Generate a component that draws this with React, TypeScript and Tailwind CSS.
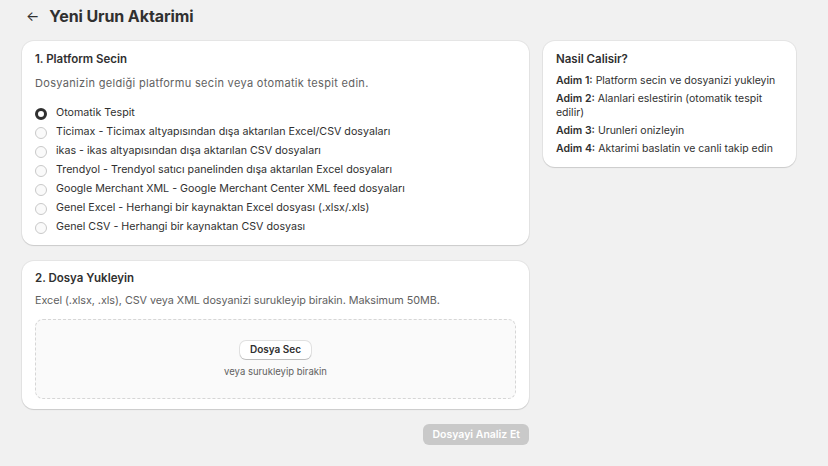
import { useState } from 'react';

const platforms = [
  { id: 'auto', label: 'Otomatik Tespit' },
  { id: 'ticimax', label: 'Ticimax - Ticimax altyapısından dışa aktarılan Excel/CSV dosyaları' },
  { id: 'ikas', label: 'ikas - ikas altyapısından dışa aktarılan CSV dosyaları' },
  { id: 'trendyol', label: 'Trendyol - Trendyol satıcı panelinden dışa aktarılan Excel dosyaları' },
  { id: 'gmc', label: 'Google Merchant XML - Google Merchant Center XML feed dosyaları' },
  { id: 'excel', label: 'Genel Excel - Herhangi bir kaynaktan Excel dosyası (.xlsx/.xls)' },
  { id: 'csv', label: 'Genel CSV - Herhangi bir kaynaktan CSV dosyası' },
];

const steps = [
  { title: 'Adim 1:', text: 'Platform secin ve dosyanizi yukleyin' },
  { title: 'Adim 2:', text: 'Alanlari eslestirin (otomatik tespit edilir)' },
  { title: 'Adim 3:', text: 'Urunleri onizleyin' },
  { title: 'Adim 4:', text: 'Aktarimi baslatin ve canli takip edin' },
];

const card =
  'bg-white rounded-[12px] shadow-[0_1px_1px_0_rgba(26,26,26,0.12),0_0_0_1px_rgba(26,26,26,0.05)]';

export default function App() {
  const [platform, setPlatform] = useState('auto');

  return (
    <div className="min-h-[466px] bg-[#f1f1f1] text-[#303030] font-['Inter','Liberation_Sans',sans-serif] px-[22px]">
      <div className="flex items-center h-[31px] pl-[4px] gap-[10px]">
        <button className="text-[14px] leading-none text-[#303030]">←</button>
        <h1 className="text-[16px] font-bold tracking-[-0.1px]">Yeni Urun Aktarimi</h1>
      </div>

      <div className="flex items-start gap-[14px] mt-[10px]">
        <div className="w-[507px] flex flex-col gap-[16px]">
          <div className={`${card} px-[13px] pt-[10px] pb-[8px]`}>
            <h2 className="text-[11.5px] leading-[16px] font-semibold">1. Platform Secin</h2>
            <p className="mt-[8px] text-[11px] tracking-[0.32px] leading-[16px] text-[#616161]">
              Dosyanizin geldiği platformu secin veya otomatik tespit edin.
            </p>
            <div className="mt-[13px] flex flex-col">
              {platforms.map((p) => (
                <label
                  key={p.id}
                  className="flex items-center h-[19px] gap-[9px] cursor-pointer text-[10.7px]"
                  onClick={() => setPlatform(p.id)}
                >
                  <span
                    className={
                      platform === p.id
                        ? 'w-[12px] h-[12px] rounded-full border-[3.5px] border-[#303030] bg-white shrink-0'
                        : 'w-[12px] h-[12px] rounded-full border border-[#c9c9c9] bg-[#fafafa] shrink-0'
                    }
                  />
                  <span>{p.label}</span>
                </label>
              ))}
            </div>
          </div>

          <div className={`${card} px-[13px] pt-[9px] pb-[10px]`}>
            <h2 className="text-[11.5px] leading-[16px] font-semibold">2. Dosya Yukleyin</h2>
            <p className="mt-[7px] text-[10.8px] tracking-[-0.05px] leading-[16px] text-[#616161]">
              Excel (.xlsx, .xls), CSV veya XML dosyanizi surukleyip birakin. Maksimum 50MB.
            </p>
            <div className="mt-[10px] h-[80px] rounded-[8px] border border-dashed border-[#d6d6d6] bg-[#fafafa] flex flex-col items-center justify-center">
              <button className="mt-[2px] h-[18px] px-[10px] rounded-[6px] bg-white text-[10px] font-semibold shadow-[0_1px_0_0_rgba(0,0,0,0.15),0_0_0_1px_rgba(0,0,0,0.1)]">
                Dosya Sec
              </button>
              <span className="mt-[6px] text-[9.5px] text-[#616161]">veya surukleyip birakin</span>
            </div>
          </div>

          <div className="flex justify-end -mt-[1px]">
            <button
              disabled
              className="h-[21px] px-[9px] rounded-[6px] bg-[#c9c9c9] text-white text-[10.5px] font-semibold cursor-not-allowed"
            >
              Dosyayi Analiz Et
            </button>
          </div>
        </div>

        <div className={`${card} w-[253px] px-[13px] pt-[10px] pb-[11px]`}>
          <h3 className="text-[11.5px] leading-[16px] font-semibold">Nasil Calisir?</h3>
          <div className="mt-[7px] flex flex-col gap-[4px]">
            {steps.map((s) => (
              <p key={s.title} className="text-[10.5px] leading-[14px]">
                <span className="font-semibold">{s.title}</span> {s.text}
              </p>
            ))}
          </div>
        </div>
      </div>
    </div>
  );
}
